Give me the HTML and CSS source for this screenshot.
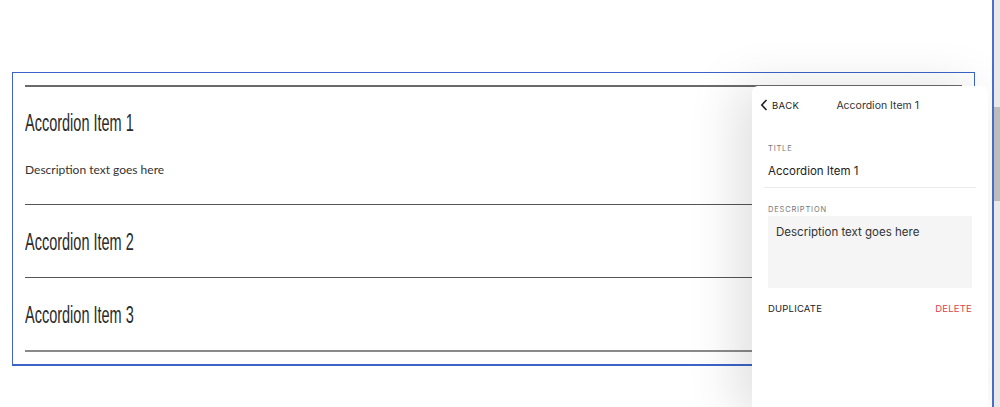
FILE: index.html
```html
<!DOCTYPE html>
<html>
<head>
<meta charset="utf-8">
<link rel="stylesheet" href="styles.css">
</head>
<body>
<div class="viewport">
  <main class="page">
    <section class="frame">
      <div class="item">
        <div class="item-head"><h2 class="item-title">Accordion Item 1</h2></div>
        <p class="item-desc">Description text goes here</p>
      </div>
      <div class="item">
        <div class="item-head"><h2 class="item-title">Accordion Item 2</h2></div>
      </div>
      <div class="item item-last">
        <div class="item-head"><h2 class="item-title">Accordion Item 3</h2></div>
      </div>
    </section>

    <aside class="panel">
      <div class="panel-head">
        <span class="back">
          <svg class="chev" width="8" height="12" viewBox="0 0 8 12"><path d="M6.5 1 L1.8 6 L6.5 11" fill="none" stroke="#222" stroke-width="1.6"/></svg>
          BACK
        </span>
        <span class="panel-title">Accordion Item 1</span>
      </div>
      <div class="field">
        <div class="label">TITLE</div>
        <div class="value">Accordion Item 1</div>
      </div>
      <div class="field field-desc">
        <div class="label">DESCRIPTION</div>
        <div class="textarea">Description text goes here</div>
      </div>
      <div class="actions">
        <span class="dup">DUPLICATE</span>
        <span class="del">DELETE</span>
      </div>
    </aside>
  </main>
  <div class="edge"></div>
  <div class="scrollbar"><div class="thumb"></div></div>
</div>
</body>
</html>
```

FILE: styles.css
```css
html, body {
  margin: 0;
  padding: 0;
  background: #fff;
}
body {
  font-family: "Lato", "Liberation Sans", sans-serif;
  overflow: hidden;
}
.viewport {
  display: flex;
  width: 1000px;
  height: 407px;
}
.page {
  position: relative;
  flex: 1;
  padding: 72px 0 0 12px;
  box-sizing: border-box;
}
.frame {
  width: 963px;
  box-sizing: border-box;
  border: 1px solid #3b63c8;
  border-bottom-width: 2px;
  padding: 12px 12px 12px 12px;
}
.item {
  border-top: 1px solid #555;
}
.item-last {
  border-bottom: 2px solid #8a8a8a;
}
.item:first-child {
  border-top: 2px solid #6a6a6a;
}
.item-head {
  height: 72px;
  display: flex;
  align-items: center;
}
.item:first-child .item-head {
  height: 71px;
}
.item-title {
  margin: 0;
  font-family: "Liberation Sans", sans-serif;
  font-weight: 400;
  font-size: 23px;
  color: #2a2a2a;
  transform: scaleX(0.63);
  transform-origin: 0 50%;
  white-space: nowrap;
  padding-top: 2px;
}
.item-desc {
  margin: 0;
  padding: 2px 0 24px;
  font-size: 12px;
  line-height: 20px;
  color: #333;
}
.edge {
  width: 2px;
  background: #4a6fcf;
  margin-left: 1px;
}
.scrollbar {
  width: 6px;
  background: #e9e9e9;
  position: relative;
  padding-top: 107px;
}
.thumb {
  height: 94px;
  background: #bcbcbc;
}
.panel {
  position: absolute;
  left: 752px;
  top: 86px;
  width: 236px;
  height: 330px;
  background: #fff;
  border-radius: 6px 6px 0 0;
  box-shadow: -16px 0 50px rgba(0, 0, 0, 0.12);
  font-family: "Inter", "Liberation Sans", sans-serif;
  color: #222;
}
.panel-head {
  display: flex;
  align-items: center;
  height: 38px;
  padding: 0 0 0 8px;
}
.back {
  display: flex;
  align-items: center;
  gap: 4px;
  font-size: 9.5px;
  letter-spacing: 0.4px;
  color: #222;
}
.chev { display: block; }
.panel-title {
  margin-left: 37px;
  font-size: 10.5px;
  color: #333;
}
.field {
  margin: 0 12px;
  padding: 20px 4px 0;
  border-bottom: 1px solid #ebebeb;
}
.label {
  font-size: 7.5px;
  letter-spacing: 0.8px;
  color: #777;
}
.value {
  font-size: 11.5px;
  color: #222;
  padding: 11px 0 9px;
}
.field-desc {
  border-bottom: 0;
  padding-top: 17px;
}
.field-desc .label {
  margin-bottom: 2px;
}
.textarea {
  background: #f5f5f5;
  height: 72px;
  box-sizing: border-box;
  padding: 9px 8px;
  font-size: 11.5px;
  color: #333;
}
.actions {
  display: flex;
  justify-content: space-between;
  padding: 15px 16px 0;
  font-size: 9.5px;
  letter-spacing: 0.2px;
}
.dup { color: #222; }
.del { color: #e0404a; }
```
